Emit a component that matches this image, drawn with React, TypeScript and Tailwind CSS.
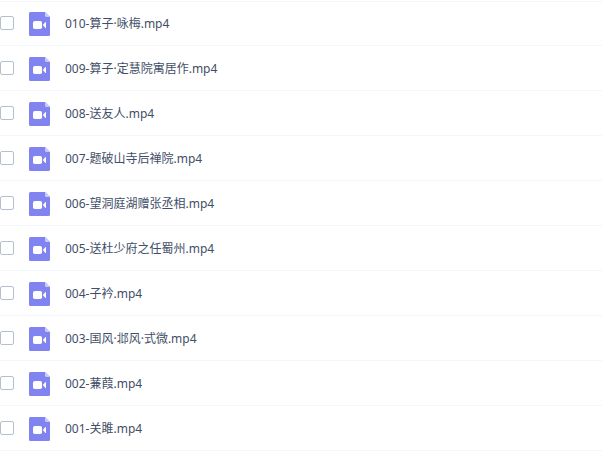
interface VideoFile {
    id: string;
    title: string;
}

const FILES: VideoFile[] = [
    { id: '010', title: '算子·咏梅' },
    { id: '009', title: '算子·定慧院寓居作' },
    { id: '008', title: '送友人' },
    { id: '007', title: '题破山寺后禅院' },
    { id: '006', title: '望洞庭湖赠张丞相' },
    { id: '005', title: '送杜少府之任蜀州' },
    { id: '004', title: '子衿' },
    { id: '003', title: '国风·邶风·式微' },
    { id: '002', title: '蒹葭' },
    { id: '001', title: '关雎' },
];

function VideoIcon() {
    return (
        <svg width="21" height="24" viewBox="0 0 21 24" className="shrink-0">
            <path d="M1.5 0H16L21 5V22.5a1.5 1.5 0 0 1-1.5 1.5H1.5A1.5 1.5 0 0 1 0 22.5V1.5A1.5 1.5 0 0 1 1.5 0Z" fill="#8183f1" />
            <path d="M16 0L21 5H17.5A1.5 1.5 0 0 1 16 3.5Z" fill="#c9caff" />
            <rect x="4" y="9" width="9" height="8" rx="1.8" fill="#fff" />
            <path d="M13.8 12.9L16.2 10.2Q17 9.6 17 10.6V15.4Q17 16.4 16.2 15.7Z" fill="#fff" />
        </svg>
    );
}

function FileRow({ file }: { file: VideoFile }) {
    return (
        <li className="flex h-[45px] items-center border-b border-[#f2f6fd] first:shadow-[inset_0_1px_#f5f6f8]">
            <input
                type="checkbox"
                aria-label={file.title}
                className="size-3.5 shrink-0 appearance-none rounded-[2px] border border-[#b4c0d0] bg-white"
            />
            <div className="ml-[15px] mt-px">
                <VideoIcon />
            </div>
            <span className="ml-[15px] mt-px whitespace-nowrap text-[12px] leading-4 text-[#424e67]">
                {file.id}-{file.title}.mp4
            </span>
        </li>
    );
}

export default function App() {
    return (
        <div className="h-screen overflow-hidden bg-white pt-px font-['Noto_Sans','Noto_Sans_CJK_SC',sans-serif]">
            <ul>
                {FILES.map((file) => (
                    <FileRow key={file.id} file={file} />
                ))}
            </ul>
        </div>
    );
}
